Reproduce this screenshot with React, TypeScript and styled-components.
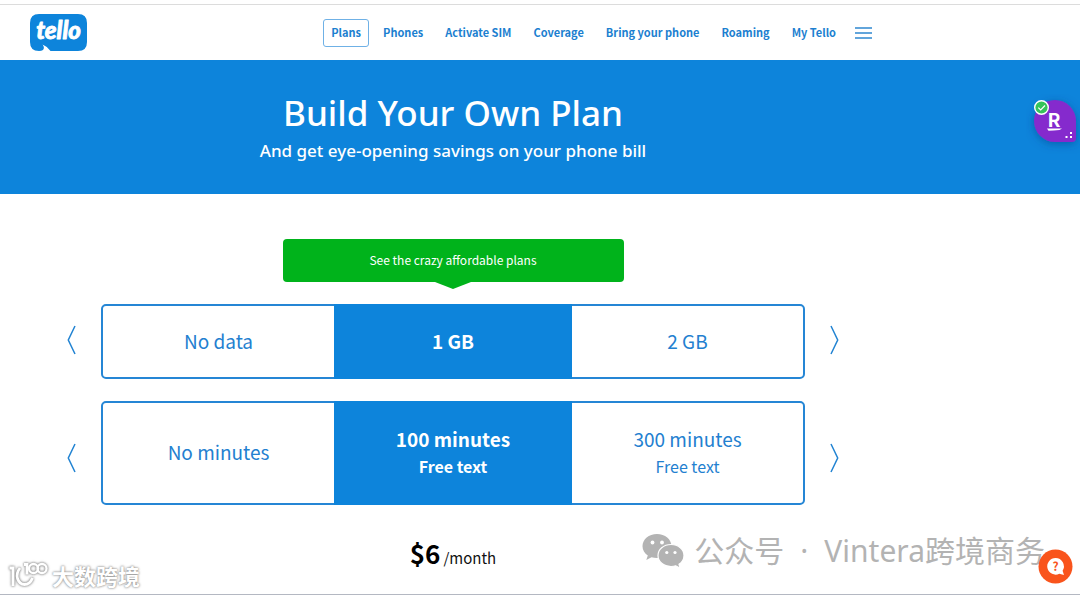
import React, { useState } from "react";
import styled, { createGlobalStyle } from "styled-components";

const blue = "#0d84db";
const sans = '"Noto Sans CJK SC", "Open Sans", sans-serif';
const display = '"Noto Sans", "Open Sans", sans-serif';

const GlobalStyle = createGlobalStyle`
  * { box-sizing: border-box; }
  body { margin: 0; background: #fff; font-family: ${sans}; color: #111; }
  button { font: inherit; border: 0; padding: 0; background: none; cursor: pointer; }
`;

const Page = styled.div`
  position: relative;
  min-height: 100vh;
  overflow: hidden;
  display: flex;
  flex-direction: column;
  padding-top: 4px;
  border-bottom: 1px solid #b4b8c2;
`;

const Header = styled.header`
  display: flex;
  align-items: center;
  justify-content: space-between;
  height: 56px;
  padding: 0 208px 0 30px;
  border-top: 1px solid #dcdcdc;
`;

const LogoLink = styled.a`
  display: block;
  height: 38px;
`;

const Nav = styled.nav`
  display: flex;
  align-items: center;
  gap: 6px;
`;

const NavLink = styled.a<{ $active?: boolean }>`
  padding: 0 7px 2px;
  border: 1px solid ${(p) => (p.$active ? "#6fb1e6" : "transparent")};
  border-radius: 3px;
  color: #1c7fd0;
  font-size: 11px;
  font-weight: 700;
  line-height: 24px;
  text-decoration: none;
  white-space: nowrap;
`;

const MenuButton = styled.button`
  display: flex;
  margin-left: 5px;
`;

const Hero = styled.section`
  height: 134px;
  padding: 30px 174px 0 0;
  background: ${blue};
  color: #fff;
  font-family: ${display};
  text-align: center;
`;

const Title = styled.h1`
  margin: 0;
  font-size: 35px;
  font-weight: 500;
  line-height: 46px;
`;

const Subtitle = styled.p`
  margin: 0;
  font-size: 17px;
  font-weight: 500;
  line-height: 30px;
`;

const Main = styled.main`
  display: flex;
  flex-direction: column;
  padding: 45px 241px 0 67px;
`;

const Banner = styled.button`
  position: relative;
  align-self: center;
  width: 341px;
  margin-bottom: 22px;
  padding-bottom: 2px;
  border-radius: 4px;
  background: #00b31b;
  color: #fff;
  font-size: 12px;
  line-height: 41px;

  &::after {
    content: "";
    position: absolute;
    top: 100%;
    left: 50%;
    margin-left: -18px;
    border: 18px solid transparent;
    border-top: 7px solid #00b31b;
    border-bottom: 0;
  }
`;

const Slider = styled.section`
  display: flex;
  gap: 25px;
  margin-bottom: 22px;
`;

const Arrow = styled.button<{ $tall: boolean }>`
  display: flex;
  flex: none;
  padding-top: ${(p) => (p.$tall ? 42 : 21)}px;
`;

const Options = styled.div<{ $tall: boolean }>`
  flex: 1;
  display: grid;
  grid-template-columns: 1fr 34% 1fr;
  height: ${(p) => (p.$tall ? 104 : 75)}px;
  border: 2px solid #2586d5;
  border-radius: 5px;
`;

const Option = styled.button<{ $selected: boolean }>`
  display: flex;
  flex-direction: column;
  align-items: center;
  justify-content: center;
  padding-bottom: 2px;
  background: ${(p) => (p.$selected ? blue : "transparent")};
  box-shadow: ${(p) => (p.$selected ? `0 -2px ${blue}, 0 2px ${blue}` : "none")};
  color: ${(p) => (p.$selected ? "#fff" : "#2380d0")};
  font-weight: ${(p) => (p.$selected ? 700 : 400)};
`;

const Amount = styled.span`
  font-size: 19px;
  line-height: 28px;
`;

const Extra = styled.span`
  font-size: 16px;
  line-height: 26px;
`;

const Price = styled.p`
  display: flex;
  align-items: baseline;
  justify-content: center;
  gap: 3px;
  margin: 4px 0 0;
  line-height: 44px;
`;

const Sum = styled.strong`
  color: #000;
  font-size: 26px;
`;

const Period = styled.span`
  font-size: 15px;
`;

const Extension = styled.button`
  position: absolute;
  top: 94px;
  right: 0;
  display: flex;
`;

const Chat = styled.button`
  position: absolute;
  right: 7px;
  bottom: 10px;
  display: flex;
`;

const AccountMark = styled.div`
  position: absolute;
  right: 35px;
  bottom: 21px;
  display: flex;
  align-items: center;
  gap: 9px;
  color: #b3b3b3;
  font-family: "Noto Sans", "Noto Sans CJK SC", sans-serif;
  font-size: 30px;
  line-height: 44px;
  white-space: nowrap;
`;

const AccountName = styled.div`
  display: flex;
  gap: 16px;
`;

const SiteMark = styled.div`
  position: absolute;
  left: 8px;
  bottom: 4px;
  display: flex;
  align-items: center;
  gap: 4px;
  color: #fff;
  font-size: 22px;
  font-weight: 700;
  line-height: 30px;
  text-shadow: 0 0 2px #888, 0 0 3px #aaa;

  svg { filter: drop-shadow(0 0 1px #888) drop-shadow(0 0 1px #bbb); }
`;

const links = ["Plans", "Phones", "Activate SIM", "Coverage", "Bring your phone", "Roaming", "My Tello"];

type Choice = { amount: string; extra?: string };

const dataChoices: Choice[] = [{ amount: "No data" }, { amount: "1 GB" }, { amount: "2 GB" }];
const minuteChoices: Choice[] = [
  { amount: "No minutes" },
  { amount: "100 minutes", extra: "Free text" },
  { amount: "300 minutes", extra: "Free text" },
];

function Chevron({ back }: { back?: boolean }) {
  return (
    <svg width="9" height="30" viewBox="0 0 9 30" fill="none" stroke="#2183d2" strokeWidth="1.5">
      <path d={back ? "M8 1 1.3 15 8 29" : "M1 1 7.7 15 1 29"} />
    </svg>
  );
}

function Picker({ label, choices, tall = false }: { label: string; choices: Choice[]; tall?: boolean }) {
  const [selected, setSelected] = useState(1);
  const last = choices.length - 1;
  return (
    <Slider aria-label={label}>
      <Arrow $tall={tall} aria-label="Previous" onClick={() => setSelected(Math.max(0, selected - 1))}>
        <Chevron back />
      </Arrow>
      <Options $tall={tall}>
        {choices.map((c, i) => (
          <Option key={c.amount} $selected={i === selected} aria-pressed={i === selected} onClick={() => setSelected(i)}>
            <Amount>{c.amount}</Amount>
            {c.extra && <Extra>{c.extra}</Extra>}
          </Option>
        ))}
      </Options>
      <Arrow $tall={tall} aria-label="Next" onClick={() => setSelected(Math.min(last, selected + 1))}>
        <Chevron />
      </Arrow>
    </Slider>
  );
}

export default function App() {
  return (
    <Page>
      <GlobalStyle />
      <Header>
        <LogoLink href="#" aria-label="tello">
          <svg width="57" height="38" viewBox="0 0 57 38">
            <path
              d="M9 0h39q9 0 9 9v19q0 9-9 9H20.500Q17.500 32.500 12.500 30.500 15 33.500 13 36 11.500 37 9 37 0 37 0 28V9Q0 0 9 0Z"
              fill={blue}
            />
            <text x="28.500" y="25" textAnchor="middle" fill="#fff" stroke="#fff" strokeWidth="0.800" strokeLinejoin="round" fontFamily="Lato, sans-serif" fontSize="24" fontWeight="900" fontStyle="italic">
              tello
            </text>
          </svg>
        </LogoLink>
        <Nav>
          {links.map((l, i) => (
            <NavLink key={l} href="#" $active={i === 0}>{l}</NavLink>
          ))}
          <MenuButton aria-label="Menu">
            <svg width="17" height="12" viewBox="0 0 17 12" stroke="#2f88d0" strokeWidth="1.500">
              <path d="M0 1h17M0 6h17M0 11h17" />
            </svg>
          </MenuButton>
        </Nav>
      </Header>

      <Hero>
        <Title>Build Your Own Plan</Title>
        <Subtitle>And get eye-opening savings on your phone bill</Subtitle>
      </Hero>

      <Main>
        <Banner>See the crazy affordable plans</Banner>
        <Picker label="Data" choices={dataChoices} />
        <Picker label="Minutes" choices={minuteChoices} tall />
        <Price>
          <Sum>$6</Sum>
          <Period>/month</Period>
        </Price>
      </Main>

      <Extension aria-label="Rewards">
        <svg width="54" height="60" viewBox="0 0 54 60">
          <defs>
            <filter id="soft" x="-30%" y="-30%" width="160%" height="160%">
              <feDropShadow dx="0" dy="2" stdDeviation="4" floodColor="#003a80" floodOpacity="0.5" />
            </filter>
          </defs>
          <path d="M29 6a21 21 0 0 1 21 21v17q0 4-4 4H29a21 21 0 0 1 0-42Z" fill="#8529cd" filter="url(#soft)" />
          <text x="28" y="33" textAnchor="middle" fill="#fff" fontFamily={sans} fontSize="19" fontWeight="700">R</text>
          <path d="M21 34.500h15l-2.500 1.500q-6 .5-11 .8Z" fill="#fff" />
          <path d="M44 38h2v2h-2zM44 42h2v2h-2zM39.500 42h2v2h-2z" fill="#fff" />
          <circle cx="15.500" cy="13.500" r="6.800" fill="#35c45a" stroke="#fff" strokeWidth="1.400" />
          <path d="m12.300 13.600 2.400 2.300 4.300-4.400" fill="none" stroke="#fff" strokeWidth="1.200" />
        </svg>
      </Extension>

      <AccountMark>
        <svg width="43" height="36" viewBox="0 0 43 36" fill="#b3b3b3">
          <path d="M15 1C6.800 1 .5 6.400.5 13.200c0 3.800 2.100 7.100 5.300 9.400L4.300 27l5.200-2.700c1.800.5 3.600.8 5.500.8 8 0 14.500-5.300 14.500-12S23 1 15 1Z" />
          <path d="M29 11.500c-7.500 0-13 4.900-13 11s5.500 11 13 11c1.700 0 3.300-.2 4.800-.7l4.400 2.500-1.200-4c3.100-2 5-5.200 5-8.800 0-6.100-5.500-11-13-11Z" stroke="#fff" strokeWidth="1.200" />
          <g fill="#fff">
            <circle cx="10.500" cy="9.500" r="1.900" />
            <circle cx="20" cy="9.500" r="1.900" />
            <circle cx="24.800" cy="19.500" r="1.600" />
            <circle cx="33" cy="19.500" r="1.600" />
          </g>
        </svg>
        <AccountName>
          <span>公众号</span>
          <span>·</span>
          <span>Vintera跨境商务</span>
        </AccountName>
      </AccountMark>

      <SiteMark>
        <svg width="40" height="30" viewBox="0 0 40 30" fill="none" stroke="#fff" strokeWidth="2.800">
          <path d="M1.500 8h3.500v18M12 8q-4 5-2.500 10.500 2 6 7 6 5.500 0 8-6.500M16 4.500h3v10" />
          <circle cx="25.500" cy="8.500" r="4.500" strokeWidth="2.300" />
          <circle cx="34" cy="8.500" r="4.500" strokeWidth="2.300" />
        </svg>
        <span>大数跨境</span>
      </SiteMark>

      <Chat aria-label="Help">
        <svg width="35" height="35" viewBox="0 0 35 35">
          <circle cx="17.500" cy="17.500" r="17" fill="#f9541c" />
          <path d="M17.500 9a8.300 8.300 0 1 0 3.800 15.700L26 26l-1.400-4.300A8.300 8.300 0 0 0 17.500 9Z" fill="#fff" />
          <text x="17.500" y="22" textAnchor="middle" fill="#f9541c" fontFamily={sans} fontSize="12" fontWeight="700">?</text>
        </svg>
      </Chat>
    </Page>
  );
}
